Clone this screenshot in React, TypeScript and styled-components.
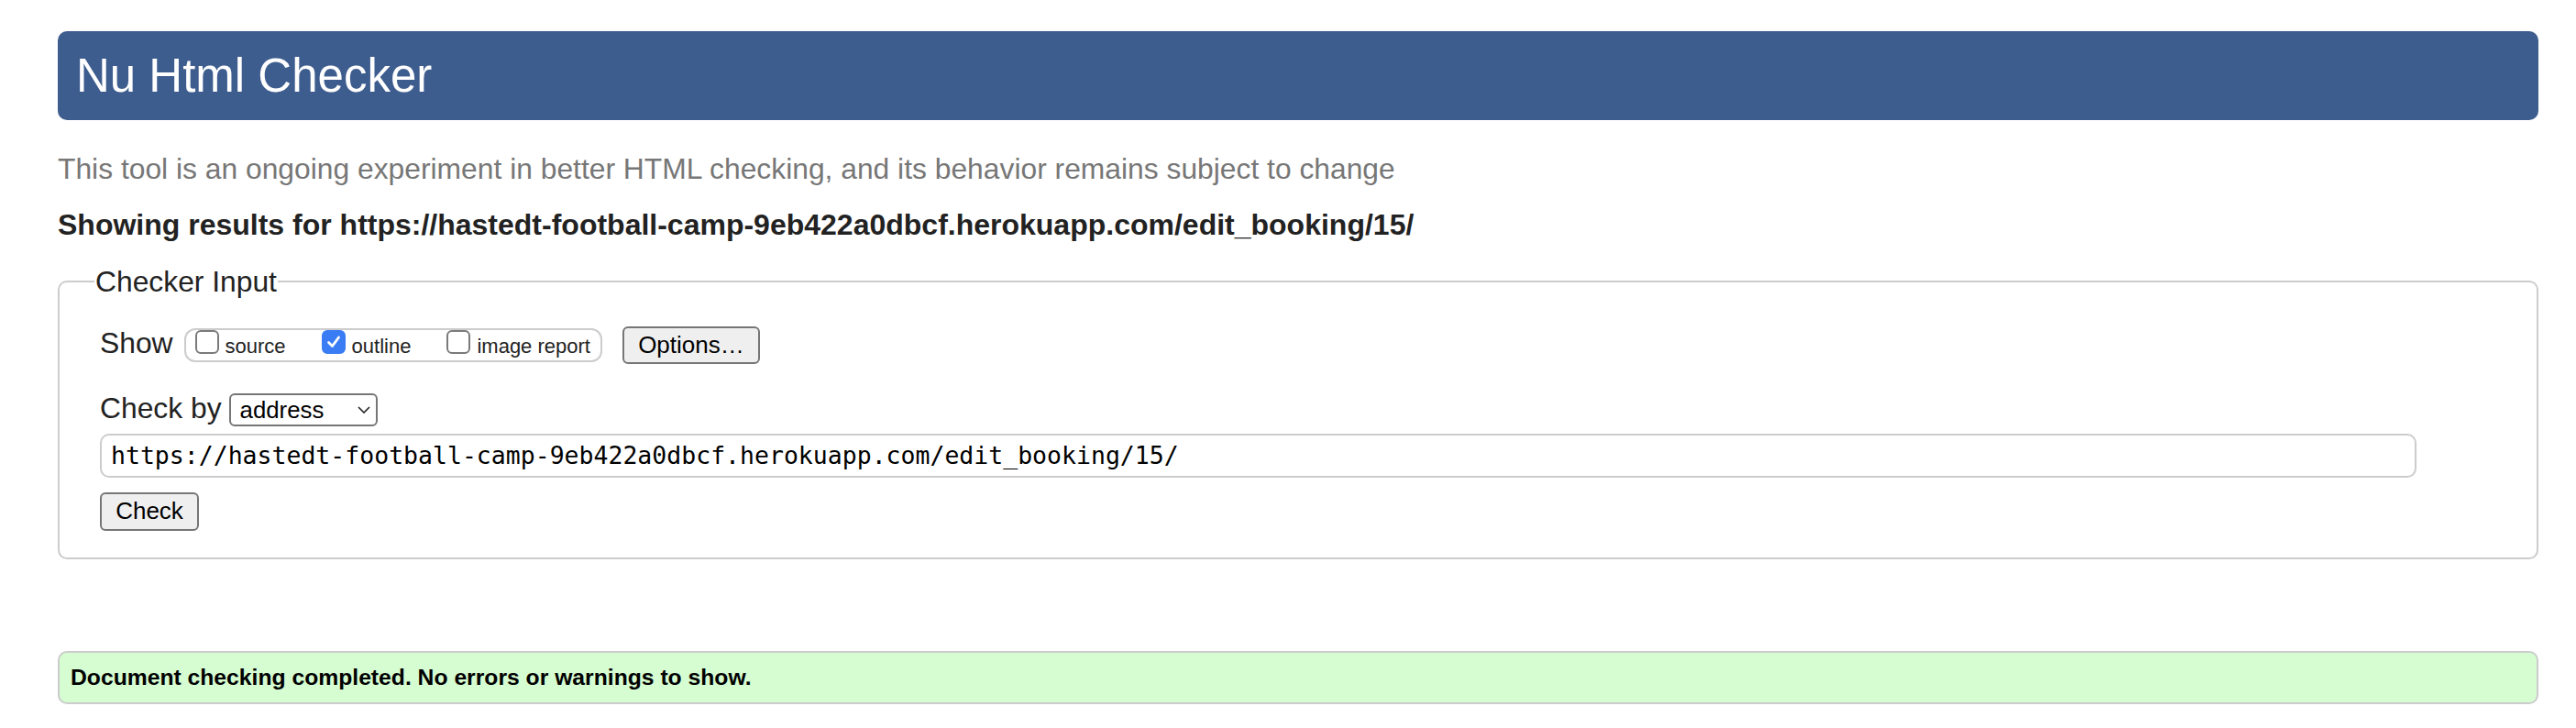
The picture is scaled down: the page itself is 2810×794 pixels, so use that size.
import React from "react";
import styled, { createGlobalStyle } from "styled-components";

const GlobalStyle = createGlobalStyle`
  html, body {
    margin: 0;
    padding: 0;
    background: #ffffff;
  }
  body {
    font-family: "Liberation Sans", Arial, Helvetica, sans-serif;
    color: #222222;
  }
`;

const Page = styled.div`
  padding: 34px 41px 24px 63px;
`;

const Header = styled.header`
  height: 97px;
  box-sizing: border-box;
  display: flex;
  align-items: center;
  padding-left: 20px;
  background: #3e5d8f;
  border-radius: 10px;
`;

const Title = styled.h1`
  margin: 0;
  font-size: 51px;
  font-weight: normal;
  line-height: 1;
  color: #ffffff;
`;

const Lead = styled.p`
  margin: 34.5px 0 0;
  font-size: 31.8px;
  line-height: 37px;
  color: #777777;
`;

const ResultsFor = styled.h2`
  margin: 24px 0 0;
  font-size: 32px;
  font-weight: bold;
  line-height: 37px;
  color: #222222;
`;

const Fieldset = styled.fieldset`
  margin: 25px 0 0;
  min-width: 0;
  border: 2px solid #cccccc;
  border-radius: 10px;
  padding: 30px 0 29px 44px;
`;

const Legend = styled.legend`
  padding: 0 1px;
  margin-left: -6px;
  font-size: 31.8px;
  line-height: 37px;
  color: #222222;
`;

const Row = styled.div<{ $top?: number }>`
  display: flex;
  align-items: center;
  margin-top: ${(p) => p.$top ?? 0}px;
`;

const FieldLabel = styled.span<{ $lift?: number }>`
  font-size: 31.8px;
  line-height: 37px;
  color: #222222;
  margin-bottom: ${(p) => p.$lift ?? 0}px;
`;

const OptionGroup = styled.div`
  display: inline-flex;
  align-items: flex-start;
  gap: 39px;
  height: 37px;
  box-sizing: border-box;
  margin-left: 12px;
  padding: 0 11px 0 10px;
  border: 2px solid #cccccc;
  border-radius: 12px;
`;

const Option = styled.label`
  display: flex;
  align-items: flex-end;
  gap: 7px;
  font-size: 22px;
  line-height: 25px;
  color: #222222;
`;

const Box = styled.span<{ $checked?: boolean }>`
  display: inline-flex;
  align-items: center;
  justify-content: center;
  width: 26px;
  height: 26px;
  box-sizing: border-box;
  margin-bottom: 4px;
  border-radius: 6px;
  border: ${(p) => (p.$checked ? "2px solid #3a7cf4" : "2px solid #7a7a7a")};
  background: ${(p) => (p.$checked ? "#3a7cf4" : "#ffffff")};
`;

const Button = styled.button<{ $w: number; $h: number; $left?: number; $top?: number }>`
  width: ${(p) => p.$w}px;
  height: ${(p) => p.$h}px;
  margin: ${(p) => p.$top ?? 0}px 0 0 ${(p) => p.$left ?? 0}px;
  padding: 0;
  box-sizing: border-box;
  font-family: "Liberation Sans", Arial, Helvetica, sans-serif;
  font-size: 26px;
  color: #000000;
  background: #efefef;
  border: 2px solid #767676;
  border-radius: 6px;
`;

const SelectWrap = styled.div`
  position: relative;
  display: inline-block;
  margin-left: 8px;
`;

const Select = styled.select`
  appearance: none;
  -webkit-appearance: none;
  display: block;
  width: 162px;
  height: 36px;
  box-sizing: border-box;
  padding: 0 0 0 10px;
  font-family: "Liberation Sans", Arial, Helvetica, sans-serif;
  font-size: 25.8px;
  color: #000000;
  background: #ffffff;
  border: 2px solid #767676;
  border-radius: 6px;
`;

const Chevron = styled.svg`
  position: absolute;
  right: 8px;
  top: 50%;
  width: 14px;
  height: 8px;
  margin-top: -4px;
  pointer-events: none;
`;

const UrlInput = styled.input`
  display: block;
  width: 2527px;
  height: 48px;
  box-sizing: border-box;
  margin-top: 5px;
  padding: 0 10px;
  font-family: "DejaVu Sans Mono", "Liberation Mono", monospace;
  font-size: 26.5px;
  color: #000000;
  background: #ffffff;
  border: 2px solid #cccccc;
  border-radius: 10px;
`;

const Success = styled.p`
  margin: 100px 0 0;
  padding: 12px 12px;
  font-size: 24.7px;
  font-weight: bold;
  line-height: 30px;
  color: #000000;
  background: #d6fdd1;
  border: 2px solid #cccccc;
  border-radius: 10px;
`;

const CheckMark = () => (
  <svg width="18" height="18" viewBox="0 0 18 18" aria-hidden="true">
    <polyline
      points="3.5,9.5 7.5,13.5 14.5,4"
      fill="none"
      stroke="#ffffff"
      strokeWidth="2.8"
      strokeLinecap="round"
      strokeLinejoin="round"
    />
  </svg>
);

const options = [
  { label: "source", checked: false },
  { label: "outline", checked: true },
  { label: "image report", checked: false },
];

export default function App() {
  return (
    <>
      <GlobalStyle />
      <Page>
        <Header>
          <Title>Nu Html Checker</Title>
        </Header>
        <Lead>
          This tool is an ongoing experiment in better HTML checking, and its behavior remains subject to change
        </Lead>
        <ResultsFor>
          Showing results for https://hastedt-football-camp-9eb422a0dbcf.herokuapp.com/edit_booking/15/
        </ResultsFor>
        <Fieldset>
          <Legend>Checker Input</Legend>
          <Row>
            <FieldLabel $lift={5}>Show</FieldLabel>
            <OptionGroup>
              {options.map((o) => (
                <Option key={o.label}>
                  <Box $checked={o.checked} role="checkbox" aria-checked={o.checked}>
                    {o.checked && <CheckMark />}
                  </Box>
                  {o.label}
                </Option>
              ))}
            </OptionGroup>
            <Button type="button" $w={150} $h={41} $left={22}>
              Options…
            </Button>
          </Row>
          <Row $top={29}>
            <FieldLabel $lift={4}>Check by</FieldLabel>
            <SelectWrap>
              <Select defaultValue="address">
                <option value="address">address</option>
                <option value="file">file upload</option>
                <option value="textarea">text input</option>
              </Select>
              <Chevron viewBox="0 0 14 8" aria-hidden="true">
                <polyline points="1,1 7,7 13,1" fill="none" stroke="#222" strokeWidth="1.6" />
              </Chevron>
            </SelectWrap>
          </Row>
          <UrlInput
            type="url"
            defaultValue="https://hastedt-football-camp-9eb422a0dbcf.herokuapp.com/edit_booking/15/"
          />
          <Button type="submit" $w={108} $h={42} $top={16}>
            Check
          </Button>
        </Fieldset>
        <Success>Document checking completed. No errors or warnings to show.</Success>
      </Page>
    </>
  );
}
